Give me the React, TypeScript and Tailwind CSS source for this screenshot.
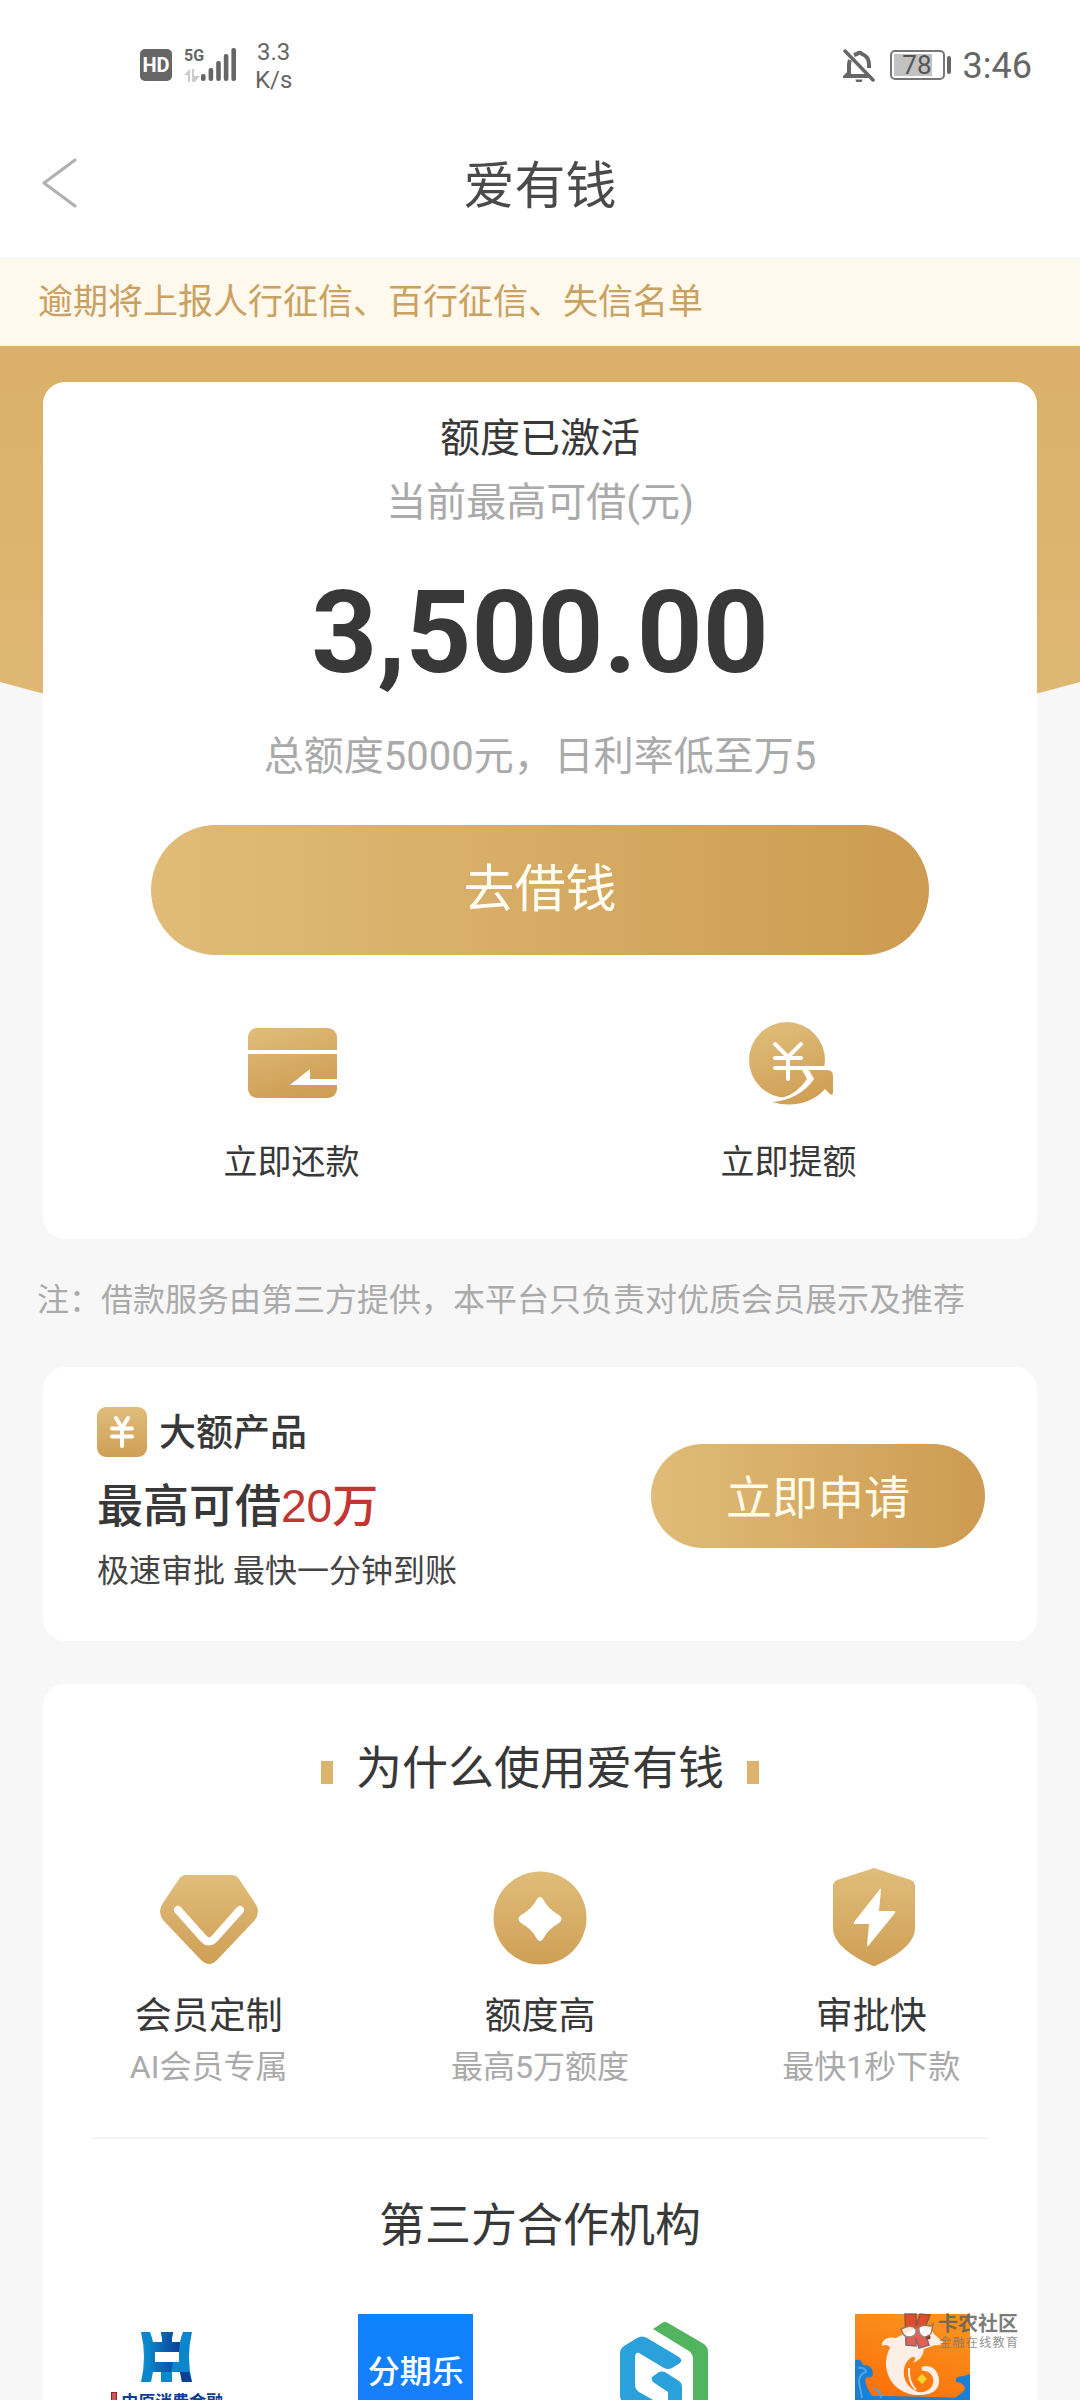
import type { ReactNode } from "react";

function SignalBars() {
  const tops = [26, 20, 13, 6, 0];
  return (
    <svg width="53" height="34" viewBox="0 0 53 34" aria-hidden="true">
      <path d="M0 27L6 21V34H4V27ZM8 21H10V28H16L11 34H8Z" fill="#ccc" />
      {tops.map((t, i) => (
        <rect key={t} x={17 + i * 7.6} y={t} width="4.6" height={33 - t} rx="2" fill="#666" />
      ))}
    </svg>
  );
}

function BellOff() {
  return (
    <svg width="32" height="34" viewBox="0 0 32 34" fill="none" stroke="#666" strokeWidth="4" aria-hidden="true">
      <path d="M2 3L30 32" strokeWidth="3.5" strokeLinecap="round" />
      <path d="M11 7L14 6A3 3 0 0 1 19 6C24 8 26 11 26 16V20" />
      <path d="M7 12C6.5 13.5 6 15 6 16.500V25L3 28H26" />
      <path d="M12.500 31.500H19.500A3.500 3 0 0 1 12.500 31.500Z" fill="#666" stroke="none" />
    </svg>
  );
}

function Gold({ id, vertical = false }: { id: string; vertical?: boolean }) {
  return (
    <defs>
      <linearGradient id={id} x1="0" y1="0" x2={vertical ? "0" : "0.4"} y2="1">
        <stop offset="0" stopColor="#e0bd7b" />
        <stop offset="1" stopColor="#cf9f55" />
      </linearGradient>
    </defs>
  );
}

function CardIcon() {
  return (
    <svg width="90" height="82" viewBox="0 0 90 82" aria-hidden="true">
      <Gold id="g-card" />
      <rect x="1" y="6" width="89" height="70" rx="9" fill="url(#g-card)" />
      <path d="M0 28H90V32H0ZM43 63L63 47V57H90V63Z" fill="#fff" />
    </svg>
  );
}

function CoinIcon() {
  return (
    <svg width="90" height="84" viewBox="0 0 90 84" className="-mb-[2px]" aria-hidden="true">
      <defs>
        <linearGradient id="g-coin" gradientUnits="userSpaceOnUse" x1="20" y1="0" x2="50" y2="84">
          <stop offset="0" stopColor="#e0bd7b" />
          <stop offset="1" stopColor="#cf9f55" />
        </linearGradient>
      </defs>
      <circle cx="43" cy="38" r="38" fill="url(#g-coin)" />
      <path d="M56 44L63 57Q54 71 38 76L20 79V84H90V44Z" fill="#fff" />
      <path d="M31 22L44 35L57 22M31 36H57M31 46H60M44 35V57" fill="none" stroke="#fff" strokeWidth="4" strokeLinecap="round" strokeLinejoin="round" />
      <path d="M28 80C46 79 61 70 70 57L65 48H83Q89 48 89 54V71Q88 74 86 72L81 67C69 81 48 86 28 80Z" fill="url(#g-coin)" />
    </svg>
  );
}

function DiamondIcon() {
  return (
    <svg width="98" height="98" viewBox="0 0 98 98" aria-hidden="true">
      <Gold id="g-dia" vertical />
      <path d="M26 7H72Q76 7 79 11L95 35Q101 43 95 52L57 92Q49 100 41 92L3 52Q-3 43 3 35L19 11Q22 7 26 7Z" fill="url(#g-dia)" />
      <path d="M18 42L43 70Q49 77 55 70L80 42" fill="none" stroke="#fff" strokeWidth="8" strokeLinecap="round" />
    </svg>
  );
}

function StarIcon() {
  return (
    <svg width="98" height="98" viewBox="0 0 98 98" aria-hidden="true">
      <Gold id="g-star" vertical />
      <circle cx="49" cy="50" r="46.500" fill="url(#g-star)" />
      <path d="M46 31Q49 27 52 31Q57 41 68 47Q73 51 68 55Q57 61 52 71Q49 75 46 71Q41 61 30 55Q25 51 30 47Q41 41 46 31Z" fill="#fff" />
    </svg>
  );
}

function ShieldIcon() {
  return (
    <svg width="98" height="98" viewBox="-3 0 98 98" aria-hidden="true">
      <Gold id="g-shield" vertical />
      <path d="M46 1Q49 -1 52 1L86 12Q90 14 90 18V60C90 76 70 89 52 97Q49 99 46 97C28 89 8 76 8 60V18Q8 14 12 12Z" fill="url(#g-shield)" />
      <path d="M55 21L29 54Q28 56 30 56H44L42 77Q42 79 44 77L70 45Q71 43 69 43H54L56 22Q56 20 55 21Z" fill="#fff" />
    </svg>
  );
}

function YenBadge() {
  return (
    <svg width="50" height="50" viewBox="0 0 50 50" aria-hidden="true">
      <Gold id="g-yen" vertical />
      <rect width="50" height="50" rx="9" fill="url(#g-yen)" />
      <path d="M19 11L25 21L31 11M15 21.500H35M15 29.500H35M25 21V39" fill="none" stroke="#fff" strokeWidth="4" strokeLinecap="round" strokeLinejoin="round" />
    </svg>
  );
}

function ZhongyuanLogo() {
  return (
    <div className="flex flex-col items-center pt-[18px]">
      <svg width="52" height="50" viewBox="0 0 52 50" aria-hidden="true">
        <defs>
          <linearGradient id="zy-l" x1="0" y1="0" x2="1" y2="0">
            <stop offset="0" stopColor="#0a8fd2" />
            <stop offset="1" stopColor="#0c3f94" />
          </linearGradient>
        </defs>
        <path d="M0 0H9Q11 5 12 10H21V6L20 0H32L31 6V10H39Q40 5 42 0H51Q45 25 51 50H41L39 40H31V50H20V40H12L10 50H0Q6 25 0 0Z" fill="#0b86cc" />
        <path d="M3 10H21V6L20 0H32L31 6V10H39L38 20H14V30H32L30 40H12L3 38Z" fill="url(#zy-l)" />
        <path d="M39 40H48L51 50H41Z" fill="#0c3f94" />
        <path d="M14 20H38V30H14Z" fill="#fff" />
      </svg>
      <div className="mt-[10px] flex items-start gap-1">
        <span className="h-4 w-[6px] border border-[#a01c22] bg-[#c8585c]" />
        <span className="text-[17px] leading-5 font-bold text-[#0b3f92]">中原消费金融</span>
      </div>
    </div>
  );
}

function FenqileLogo() {
  return (
    <div className="flex h-[115px] w-[115px] items-center justify-center bg-linear-to-b from-[#0c84fb] to-[#1a7cfa] text-[32px] leading-10 font-medium text-white">
      分期乐
    </div>
  );
}

function HexLogo() {
  return (
    <svg width="88" height="107" viewBox="0 0 88 107" className="mt-2" aria-hidden="true">
      <path d="M33 7L42 1Q45 -1 48 1L84 22Q88 25 88 30V76Q88 81 84 84L73 90V37Q73 32 69 29Z" fill="#53b45f" />
      <path d="M4 24L17 16Q22 13 27 16L59 35Q63 38 60 41L52 46Q48 48 44 46L19 31Q15 30 15 36V63Q15 67 19 70L44 84L62 94L45 103L4 81Q0 78 0 74V31Q0 27 4 24Z" fill="#2ba1dc" />
      <path d="M32 55L39 50Q42 49 45 50L59 59Q62 61 62 65V94H48V70L33 60Q31 57 32 55Z" fill="#2ba1dc" />
    </svg>
  );
}

function DolphinLogo() {
  return (
    <svg width="115" height="115" viewBox="0 0 115 115" aria-hidden="true">
      <defs>
        <linearGradient id="dol" x1="0.3" y1="0" x2="0" y2="1">
          <stop offset="0" stopColor="#f98f1c" />
          <stop offset="1" stopColor="#ff6200" />
        </linearGradient>
      </defs>
      <rect width="115" height="115" fill="url(#dol)" />
      <path d="M27 29Q31 22 41 24Q49 19 60 15Q73 10 79 20L88 28Q86 32 80 31L69 35Q68 45 58 49Q63 42 57 43C47 49 46 64 55 73Q63 81 71 77Q80 73 78 64Q75 56 68 57Q64 53 70 52Q82 52 84 65Q85 80 66 81C46 82 30 68 31 47Q32 39 35 34Q33 29 27 32Z" fill="#fdeee6" />
      <path d="M54 54Q53 68 61 76" stroke="#fdeee6" strokeWidth="2" fill="none" />
      <path d="M67 60L72 65L67 70L62 65Z" fill="#fbd430" />
      <circle cx="73" cy="23" r="2.500" fill="#8c3b12" />
      <path d="M0 47Q5 43 8 51Q18 51 18 60Q17 65 12 63Q8 66 13 75L17 82H33L115 84V115H0Z" fill="#1b7fd4" />
      <path d="M115 60L109 62Q99 62 101 68Q106 68 109 72Q112 75 105 80L99 85H115Z" fill="#1b7fd4" />
      <path d="M3 54Q10 53 11 58Q4 60 4 68L7 84M19 75Q25 76 26 84" stroke="#4ea5e8" strokeWidth="2" fill="none" />
    </svg>
  );
}

function Watermark() {
  return (
    <div className="absolute right-[62px] bottom-[50px] flex items-start opacity-80">
      <svg width="38" height="38" viewBox="0 0 38 38" aria-hidden="true">
        <path d="M5 2H16V14L20 2L30 3L24 18L29 33L19 36L16 26V34L6 33Z" fill="#dc3c32" stroke="#77484a" strokeWidth="1.500" />
        <path d="M1 17L6 15Q13 13 16 17Q17 25 9 25Q3 25 1 17Z" fill="#fff" stroke="#83706c" strokeWidth="1.500" />
        <path d="M19 15Q23 12 31 14L33 12L32 18Q31 25 24 25Q18 23 19 15Z" fill="#fff" stroke="#83706c" strokeWidth="1.500" />
      </svg>
      <div className="flex flex-col">
        <span className="text-[20px] leading-[24px] font-bold text-[#5c5c5c]">卡农社区</span>
        <span className="flex justify-between pl-px text-[12px] leading-[14px] text-[#777]">
          {"金融在线教育".split("").map((c) => (
            <span key={c}>{c}</span>
          ))}
        </span>
      </div>
    </div>
  );
}

function QuickAction({ icon, label }: { icon: ReactNode; label: string }) {
  return (
    <button type="button" className="flex flex-col items-center">
      {icon}
      <span className="mt-[34px] text-[34px] leading-[48px]">{label}</span>
    </button>
  );
}

function Feature({ icon, title, sub }: { icon: ReactNode; title: string; sub: string }) {
  return (
    <li className="flex flex-col items-center">
      {icon}
      <span className="mt-[27px] text-[37px] leading-[48px]">{title}</span>
      <span className="mt-1 text-[32px] leading-[44px] text-[#aaa]">{sub}</span>
    </li>
  );
}

export default function App() {
  return (
    <div className="relative h-screen overflow-hidden bg-[#f7f7f7] font-['Roboto','Noto_Sans_CJK_SC',sans-serif] text-[#383838]">
      <div className="flex h-[112px] items-center justify-between bg-white pt-[18px] pr-[48px] pl-[140px] text-[#666]">
        <div className="flex items-center">
          <span className="flex h-8 w-8 items-center justify-center rounded-[5px] bg-[#666] text-[20px] font-bold text-white">HD</span>
          <div className="relative ml-3">
            <SignalBars />
            <span className="absolute top-0 left-0 text-[16px] leading-4 font-bold">5G</span>
          </div>
          <div className="ml-[18px] pt-px text-center text-[24px] leading-7">
            <div>3.3</div>
            <div>K/s</div>
          </div>
        </div>
        <div className="flex items-center">
          <BellOff />
          <div className="ml-[15px] flex h-[30px] w-[55px] items-center rounded-[5px] border-2 border-[#777] p-[2px]">
            <span className="flex h-full w-[38px] items-center justify-end bg-[#c2c2c2] text-[26px] leading-none text-[#555]">78</span>
          </div>
          <span className="ml-[2px] h-[18px] w-1 rounded-sm bg-[#666]" />
          <span className="ml-3 pt-[2px] text-[36px] leading-10">3:46</span>
        </div>
      </div>

      <header className="grid h-[146px] grid-cols-[1fr_auto_1fr] items-center bg-white px-[42px]">
        <button type="button" aria-label="返回" className="w-9 pb-1">
          <svg width="36" height="50" viewBox="0 0 36 50" fill="none" stroke="#b0b0b0" strokeWidth="3" strokeLinecap="round" strokeLinejoin="round" aria-hidden="true">
            <path d="M33 2L2 25L33 48" />
          </svg>
        </button>
        <h1 className="pt-1 text-[51px] leading-[60px] text-[#4a4a4a]">爱有钱</h1>
      </header>

      <p className="border-t border-[#f5f3ee] bg-[#fff8ec] py-5 pl-[38px] text-[35px] leading-[47px] text-[#c9a161]">
        逾期将上报人行征信、百行征信、失信名单
      </p>

      <main className="relative px-[43px] pt-9">
        <svg className="absolute inset-x-0 top-0 h-[410px] w-full" viewBox="0 0 1080 410" preserveAspectRatio="none" aria-hidden="true">
          <defs>
            <linearGradient id="hero" x1="0" y1="0" x2="0" y2="1">
              <stop offset="0" stopColor="#dbb169" />
              <stop offset="1" stopColor="#dfb874" />
            </linearGradient>
          </defs>
          <path d="M0 0H1080V336Q540 486 0 336Z" fill="url(#hero)" />
        </svg>

        <section className="relative flex flex-col items-center rounded-[22px] bg-white pt-[25px] pb-[53px]">
          <h2 className="text-[40px] leading-[64px]">额度已激活</h2>
          <p className="text-[40px] leading-[64px] text-[#aaa]">当前最高可借(元)</p>
          <p className="mt-[26px] text-[115px] leading-[144px] font-bold">3,500.00</p>
          <p className="mt-5 text-[40px] leading-[64px] text-[#aaa]">总额度5000元，日利率低至万5</p>
          <div className="mt-9 w-full px-[108px]">
            <button type="button" className="h-[130px] w-full rounded-full bg-linear-to-r from-[#e0bc78] to-[#cd9b51] text-[51px] text-[#fffef4]">
              去借钱
            </button>
          </div>
          <div className="mt-[67px] grid w-full grid-cols-2">
            <QuickAction icon={<CardIcon />} label="立即还款" />
            <QuickAction icon={<CoinIcon />} label="立即提额" />
          </div>
        </section>

        <p className="-ml-[6px] mt-[37px] text-[32px] leading-[48px] whitespace-nowrap text-[#aaa]">
          注：借款服务由第三方提供，本平台只负责对优质会员展示及推荐
        </p>

        <section className="mt-[43px] flex items-start justify-between rounded-[22px] bg-white pt-10 pr-[52px] pb-12 pl-[54px]">
          <div>
            <div className="flex items-start gap-3">
              <YenBadge />
              <h2 className="text-[37px] leading-[54px] font-medium">大额产品</h2>
            </div>
            <p className="mt-[15px] text-[46px] leading-[60px] font-medium">
              最高可借<span className="font-['Liberation_Sans','Noto_Sans_CJK_SC',sans-serif] text-[#c13632]">20万</span>
            </p>
            <p className="mt-[13px] text-[32px] leading-[44px] text-[#444]">极速审批 最快一分钟到账</p>
          </div>
          <button type="button" className="mt-[37px] h-[104px] w-[334px] rounded-full bg-linear-to-r from-[#e0bc78] to-[#cd9b51] pt-1 text-[46px] text-[#fffbe8]">
            立即申请
          </button>
        </section>

        <section className="mt-[43px] rounded-t-[22px] bg-white pt-[54px]">
          <div className="flex items-center justify-center gap-[23px]">
            <span className="mt-2 h-[23px] w-3 bg-[#dcb36c]" />
            <h2 className="text-[46px] leading-[60px]">为什么使用爱有钱</h2>
            <span className="mt-2 h-[23px] w-3 bg-[#dcb36c]" />
          </div>
          <ul className="mt-[70px] grid grid-cols-3">
            <Feature icon={<DiamondIcon />} title="会员定制" sub="AI会员专属" />
            <Feature icon={<StarIcon />} title="额度高" sub="最高5万额度" />
            <Feature icon={<ShieldIcon />} title="审批快" sub="最快1秒下款" />
          </ul>
          <hr className="mx-[50px] mt-12 border-t-2 border-[#f3f3f3]" />
          <h2 className="mt-[56px] text-center text-[46px] leading-[60px]">第三方合作机构</h2>
          <div className="mt-[59px] grid grid-cols-4 items-start justify-items-center">
            <ZhongyuanLogo />
            <FenqileLogo />
            <HexLogo />
            <DolphinLogo />
          </div>
        </section>
      </main>
      <Watermark />
    </div>
  );
}
